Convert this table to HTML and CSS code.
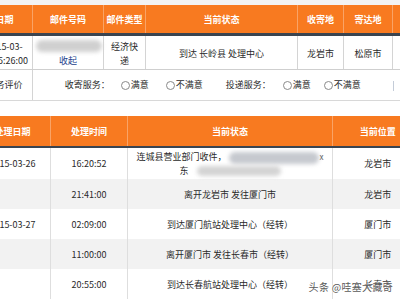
FILE: index.html
```html
<!DOCTYPE html>
<html lang="zh">
<head>
<meta charset="utf-8">
<link rel="stylesheet" href="styles.css">
</head>
<body>
<div class="strip"></div>
<table class="t1">
  <colgroup>
    <col class="c-a"><col class="c-b"><col class="c-c"><col class="c-d"><col class="c-e"><col class="c-f"><col class="c-g">
  </colgroup>
  <thead>
    <tr><th>日期</th><th>邮件号码</th><th>邮件类型</th><th>当前状态</th><th>收寄地</th><th>寄达地</th><th></th></tr>
  </thead>
  <tbody>
    <tr class="data">
      <td>2015-03-<br>26 15:26:00</td>
      <td><span class="blob blob-num"></span><a class="link">收起</a></td>
      <td>经济快递</td>
      <td>到达 长岭县 处理中心</td>
      <td>龙岩市</td>
      <td>松原市</td>
      <td></td>
    </tr>
    <tr class="eval">
      <td>服务评价</td>
      <td colspan="5">
        <div class="evals">
          <span class="lbl">收寄服务：</span>
          <span class="opt"><i class="radio"></i>满意</span>
          <span class="opt gap1"><i class="radio"></i>不满意</span>
          <span class="lbl gap2">投递服务：</span>
          <span class="opt gap3"><i class="radio"></i>满意</span>
          <span class="opt gap4"><i class="radio"></i>不满意</span>
        </div>
      </td>
      <td class="g"><i class="bar"></i></td>
    </tr>
  </tbody>
</table>

<table class="t2">
  <colgroup>
    <col class="d-a"><col class="d-b"><col class="d-c"><col class="d-d">
  </colgroup>
  <thead>
    <tr><th>处理日期</th><th>处理时间</th><th>当前状态</th><th>当前位置</th></tr>
  </thead>
  <tbody>
    <tr class="r1">
      <td>2015-03-26</td>
      <td>16:20:52</td>
      <td><div>连城县营业部门收件，<span class="blob blob-a"></span><span class="x">x</span></div><div>东<span class="blob blob-b"></span></div></td>
      <td>龙岩市</td>
    </tr>
    <tr class="alt">
      <td></td>
      <td>21:41:00</td>
      <td>离开龙岩市 发往厦门市</td>
      <td>龙岩市</td>
    </tr>
    <tr>
      <td>2015-03-27</td>
      <td>02:09:00</td>
      <td>到达厦门航站处理中心（经转）</td>
      <td>厦门市</td>
    </tr>
    <tr class="alt">
      <td></td>
      <td>11:00:00</td>
      <td>离开厦门市 发往长春市（经转）</td>
      <td>厦门市</td>
    </tr>
    <tr>
      <td></td>
      <td>20:55:00</td>
      <td>到达长春航站处理中心（经转）</td>
      <td>长春市</td>
    </tr>
  </tbody>
</table>

<div class="watermark">头条 @哇塞大藏奇</div>
</body>
</html>
```

FILE: styles.css
```css
html, body {
  margin: 0;
  padding: 0;
}
body {
  width: 400px;
  height: 300px;
  overflow: hidden;
  position: relative;
  background: #fff;
  font-family: "Noto Sans CJK SC", "Noto Sans", sans-serif;
  font-size: 9px;
  color: #2a2a2a;
}
.strip {
  height: 5px;
  background: #f3f3f3;
}
table {
  border-collapse: collapse;
  table-layout: fixed;
}
th {
  background: #f87a20;
  color: #fff;
  font-weight: bold;
  padding: 0;
  border-left: 1px solid #f9a366;
  text-align: center;
  white-space: nowrap;
}
td {
  padding: 0 3px;
  text-align: center;
  border-left: 1px solid #d4d4d4;
  line-height: 14px;
}

/* top table */
.t1 {
  margin-left: -24px;
  width: 476px;
}
.c-a { width: 56px; }
.c-b { width: 71px; }
.c-c { width: 42px; }
.c-d { width: 152px; }
.c-e { width: 46px; }
.c-f { width: 49px; }
.c-g { width: 60px; }
.t1 th {
  height: 28px;
  border-bottom: 3px solid #3a4450;
}
.t1 .data td {
  height: 31px;
  border-bottom: 1px solid #cfcfcf;
  padding-top: 2px;
}
.t1 .eval td {
  height: 30px;
  border-bottom: 1px solid #d8d8d8;
}
.t1 .eval td.g {
  border-left: 0;
  text-align: left;
  padding: 0;
}
.bar {
  display: inline-block;
  width: 1px;
  height: 10px;
  background: #c4ccd8;
  vertical-align: middle;
}
.blob {
  display: inline-block;
  background: #cbcbcb;
  filter: blur(2px);
  vertical-align: middle;
}
.blob-num {
  display: block;
  width: 66px;
  height: 12px;
  margin: 0 auto 2px;
  border-radius: 6px;
  background: #d0d0d0;
}
.link {
  color: #1d3f8c;
}
.evals {
  display: flex;
  justify-content: center;
  align-items: center;
  white-space: nowrap;
}
.opt {
  display: inline-flex;
  align-items: center;
  margin-left: 11px;
}
.gap1 { margin-left: 17px; }
.gap2 { margin-left: 23px; }
.gap3 { margin-left: 12px; }
.gap4 { margin-left: 13px; }
.radio {
  display: inline-block;
  width: 7px;
  height: 7px;
  border: 1px solid #8a8a8a;
  border-radius: 50%;
  background: #fff;
  margin-right: 1px;
}

/* bottom table */
.t2 {
  margin-top: 15px;
  margin-left: -26px;
  width: 448px;
}
.d-a { width: 76px; }
.d-b { width: 77px; }
.d-c { width: 205px; }
.d-d { width: 90px; }
.t2 th {
  height: 30px;
  border-bottom: 2px solid #3a4450;
}
.t2 td {
  height: 30px;
  line-height: 13px;
  border-left: 1px solid #dedede;
  white-space: nowrap;
}
.t2 .r1 td {
  height: 31px;
}
.t2 tr.alt td {
  background: #f2f2f2;
}
.blob-a {
  width: 90px;
  height: 12px;
  border-radius: 6px;
  margin-left: 2px;
  background: #c6c9cf;
}
.blob-b {
  width: 84px;
  height: 10px;
  border-radius: 5px;
  margin-left: 8px;
  background: #d4d4d4;
}
.x {
  font-size: 8px;
  color: #555;
  margin-left: 1px;
}
.watermark {
  position: absolute;
  right: 7px;
  bottom: 6px;
  font-size: 10px;
  color: #5a5a5a;
  text-shadow: 0 0 2px #fff, 0 0 2px #fff;
  letter-spacing: 0.3px;
}
```
